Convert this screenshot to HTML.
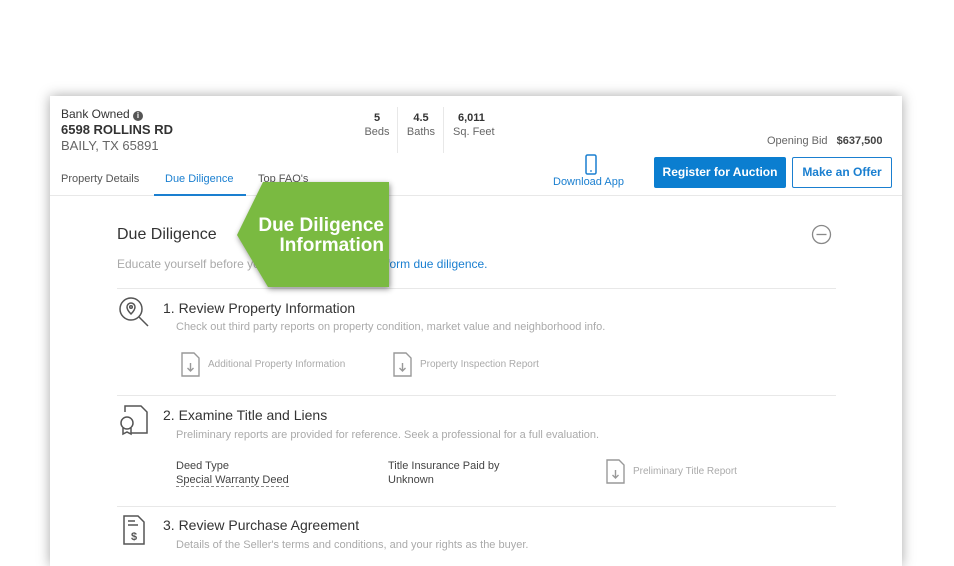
<!DOCTYPE html>
<html><head><meta charset="utf-8"><style>
*{margin:0;padding:0;box-sizing:border-box}
body{width:954px;height:546px;background:#fff;font-family:"Liberation Sans",sans-serif;position:relative;overflow:hidden;color:#333}
.card{position:absolute;left:50px;top:96px;width:852px;height:470px;background:#fff;box-shadow:0 0 12px rgba(0,0,0,.35)}
.a{position:absolute;white-space:nowrap}
.blue{color:#1a7fd0}
.gray{color:#999}
.hr{position:absolute;height:1px;background:#e8e8e8}
</style></head><body>
<div class="card">
 <div class="a" style="left:11px;top:11px;font-size:12px;color:#333">Bank Owned <span style="display:inline-block;width:10px;height:10px;border-radius:50%;background:#555;color:#fff;font-size:8px;text-align:center;line-height:10px;font-weight:bold">i</span></div>
 <div class="a" style="left:11px;top:26px;font-size:13px;font-weight:bold;color:#333">6598 ROLLINS RD</div>
 <div class="a" style="left:11px;top:42px;font-size:13px;color:#666">BAILY, TX 65891</div>
 <div class="a" style="left:312px;top:16px;width:30px;text-align:center;font-size:11px;font-weight:bold">5</div>
 <div class="a" style="left:310px;top:30px;width:34px;text-align:center;font-size:11px;color:#666">Beds</div>
 <div style="position:absolute;left:347px;top:11px;width:1px;height:46px;background:#e8e8e8"></div>
 <div class="a" style="left:356px;top:16px;width:30px;text-align:center;font-size:11px;font-weight:bold">4.5</div>
 <div class="a" style="left:354px;top:30px;width:34px;text-align:center;font-size:11px;color:#666">Baths</div>
 <div style="position:absolute;left:393px;top:11px;width:1px;height:46px;background:#e8e8e8"></div>
 <div class="a" style="left:408px;top:16px;font-size:11px;font-weight:bold">6,011</div>
 <div class="a" style="left:403px;top:30px;font-size:11px;color:#666">Sq. Feet</div>
 <div class="a" style="left:717px;top:39px;font-size:11px;color:#666">Opening Bid <b style="color:#444;margin-left:6px">$637,500</b></div>
 <svg class="a" style="left:535px;top:58px" width="12" height="22"><rect x="1" y="1" width="10" height="19" rx="1.5" fill="none" stroke="#1a7fd0" stroke-width="1.5"/><circle cx="6" cy="17" r=".9" fill="#1a7fd0"/></svg>
 <div class="a blue" style="left:503px;top:80px;font-size:11px">Download App</div>
 <div class="a" style="left:604px;top:61px;width:132px;height:31px;background:#0b7ed0;border-radius:2px;color:#fff;font-size:12px;font-weight:bold;text-align:center;line-height:31px">Register for Auction</div>
 <div class="a" style="left:742px;top:61px;width:100px;height:31px;border:1px solid #1a7fd0;border-radius:2px;color:#1a7fd0;font-size:12px;font-weight:bold;text-align:center;line-height:29px">Make an Offer</div>
 <div class="a" style="left:11px;top:77px;font-size:11px;color:#555">Property Details</div>
 <div class="a blue" style="left:115px;top:77px;font-size:11px">Due Diligence</div>
 <div class="a" style="left:208px;top:77px;font-size:11px;color:#555">Top FAQ's</div>
 <div class="hr" style="left:0;top:99px;width:852px"></div>
 <div style="position:absolute;left:104px;top:98px;width:92px;height:2px;background:#1a7fd0"></div>
 <div class="a" style="left:67px;top:130px;font-size:16px;color:#333">Due Diligence</div>
 <svg class="a" style="left:761px;top:128px" width="21" height="21"><circle cx="10.5" cy="10.5" r="9" fill="none" stroke="#888" stroke-width="1.3"/><line x1="5.5" y1="10.5" x2="15.5" y2="10.5" stroke="#888" stroke-width="1.3"/></svg>
 <div class="a" style="left:67px;top:161px;font-size:12px;color:#aaa">Educate yourself before you bid. Here's how to <span class="blue">perform due diligence.</span></div>
 <div class="hr" style="left:67px;top:192px;width:719px"></div>
 <svg class="a" style="left:68px;top:200px" width="32" height="34" fill="none" stroke="#555" stroke-width="1.5"><circle cx="13" cy="13" r="11"/><path d="M21 21L30 30"/><path d="M13 7a4 4 0 0 1 4 4c0 3-4 7-4 7s-4-4-4-7a4 4 0 0 1 4-4z"/><circle cx="13" cy="11" r="1.3"/></svg>
 <div class="a" style="left:113px;top:204px;font-size:14px;color:#333">1. Review Property Information</div>
 <div class="a" style="left:126px;top:225px;font-size:11px;color:#aaa">Check out third party reports on property condition, market value and neighborhood info.</div>
 <svg class="a" style="left:130px;top:255px" width="22" height="28" fill="none" stroke="#999" stroke-width="1.4"><path d="M2 2h12l5 5v18H2z"/><path d="M10.5 12v8M7.5 17l3 3 3-3"/></svg>
 <div class="a" style="left:158px;top:263px;font-size:10px;color:#aaa">Additional Property Information</div>
 <svg class="a" style="left:342px;top:255px" width="22" height="28" fill="none" stroke="#999" stroke-width="1.4"><path d="M2 2h12l5 5v18H2z"/><path d="M10.5 12v8M7.5 17l3 3 3-3"/></svg>
 <div class="a" style="left:370px;top:263px;font-size:10px;color:#aaa">Property Inspection Report</div>
 <div class="hr" style="left:67px;top:299px;width:719px"></div>
 <svg class="a" style="left:67px;top:308px" width="34" height="32" fill="none" stroke="#555" stroke-width="1.5"><path d="M8 8V2h16l6 6v21H14"/><circle cx="10" cy="19" r="6"/><path d="M6 24v6l4-2 4 2v-6"/></svg>
 <div class="a" style="left:113px;top:311px;font-size:14px;color:#333">2. Examine Title and Liens</div>
 <div class="a" style="left:126px;top:333px;font-size:11px;color:#aaa">Preliminary reports are provided for reference. Seek a professional for a full evaluation.</div>
 <div class="a" style="left:126px;top:364px;font-size:11px;color:#444">Deed Type</div>
 <div class="a" style="left:126px;top:378px;font-size:11px;color:#444;border-bottom:1px dashed #888">Special Warranty Deed</div>
 <div class="a" style="left:338px;top:364px;font-size:11px;color:#444">Title Insurance Paid by</div>
 <div class="a" style="left:338px;top:378px;font-size:11px;color:#444">Unknown</div>
 <svg class="a" style="left:555px;top:362px" width="22" height="28" fill="none" stroke="#999" stroke-width="1.4"><path d="M2 2h12l5 5v18H2z"/><path d="M10.5 12v8M7.5 17l3 3 3-3"/></svg>
 <div class="a" style="left:583px;top:370px;font-size:10px;color:#aaa">Preliminary Title Report</div>
 <div class="hr" style="left:67px;top:410px;width:719px"></div>
 <svg class="a" style="left:72px;top:418px" width="24" height="32" fill="none" stroke="#555" stroke-width="1.5"><path d="M2 2h14l6 6v22H2z"/><path d="M6 7h7M6 11h10"/><text x="12" y="26" font-size="11" fill="#555" stroke="none" text-anchor="middle" font-family="Liberation Sans" font-weight="bold">$</text></svg>
 <div class="a" style="left:113px;top:421px;font-size:14px;color:#333">3. Review Purchase Agreement</div>
 <div class="a" style="left:126px;top:443px;font-size:11px;color:#aaa">Details of the Seller's terms and conditions, and your rights as the buyer.</div>
</div>
<svg style="position:absolute;left:232px;top:180px;filter:drop-shadow(1px 2px 3px rgba(0,0,0,.45))" width="162" height="112"><polygon points="31,2 157,2 157,107 36,107 5,55" fill="#7aba41"/></svg>
<div class="a" style="left:240px;top:216px;width:144px;text-align:right;color:#fff;font-size:19px;font-weight:bold;line-height:20px">Due Diligence<br>Information</div>
</body></html>
